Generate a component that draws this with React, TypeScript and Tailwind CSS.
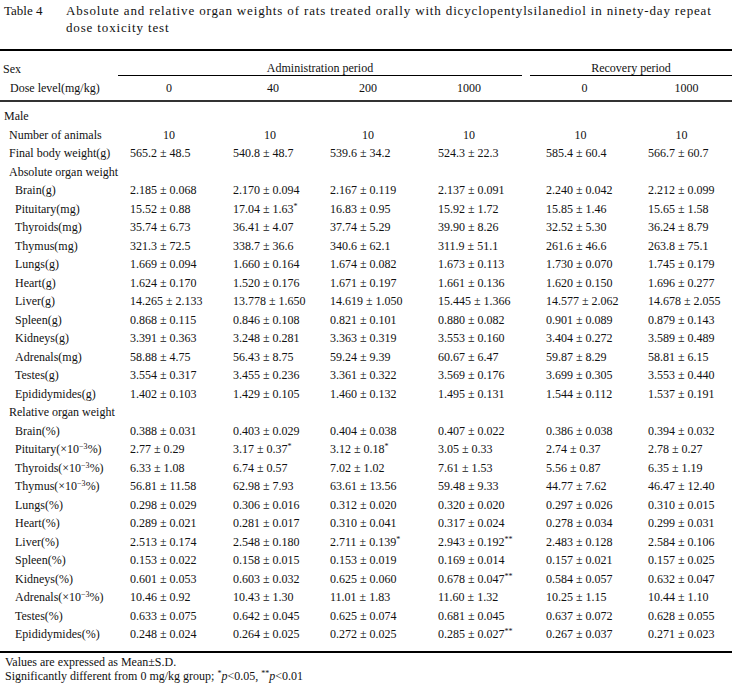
type Row = {
  label: React.ReactNode;
  indent: "group" | "item" | "sex";
  values?: string[];
};

const pad = ["pl-[12px]", "pl-[13px]", "pl-[10px]", "pl-[22px]", "pl-[16px]", "pl-[17px]"];

const e3 = (name: string) => (
  <>
    {name}(×10<sup className="text-[8px] leading-none">−3</sup>%)
  </>
);

const rows: Row[] = [
  { label: "Male", indent: "sex" },
  { label: "Number of animals", indent: "group", values: ["10", "10", "10", "10", "10", "10"] },
  { label: "Final body weight(g)", indent: "group", values: ["565.2 ± 48.5", "540.8 ± 48.7", "539.6 ± 34.2", "524.3 ± 22.3", "585.4 ± 60.4", "566.7 ± 60.7"] },
  { label: "Absolute organ weight", indent: "group" },
  { label: "Brain(g)", indent: "item", values: ["2.185 ± 0.068", "2.170 ± 0.094", "2.167 ± 0.119", "2.137 ± 0.091", "2.240 ± 0.042", "2.212 ± 0.099"] },
  { label: "Pituitary(mg)", indent: "item", values: ["15.52 ± 0.88", "17.04 ± 1.63*", "16.83 ± 0.95", "15.92 ± 1.72", "15.85 ± 1.46", "15.65 ± 1.58"] },
  { label: "Thyroids(mg)", indent: "item", values: ["35.74 ± 6.73", "36.41 ± 4.07", "37.74 ± 5.29", "39.90 ± 8.26", "32.52 ± 5.30", "36.24 ± 8.79"] },
  { label: "Thymus(mg)", indent: "item", values: ["321.3 ± 72.5", "338.7 ± 36.6", "340.6 ± 62.1", "311.9 ± 51.1", "261.6 ± 46.6", "263.8 ± 75.1"] },
  { label: "Lungs(g)", indent: "item", values: ["1.669 ± 0.094", "1.660 ± 0.164", "1.674 ± 0.082", "1.673 ± 0.113", "1.730 ± 0.070", "1.745 ± 0.179"] },
  { label: "Heart(g)", indent: "item", values: ["1.624 ± 0.170", "1.520 ± 0.176", "1.671 ± 0.197", "1.661 ± 0.136", "1.620 ± 0.150", "1.696 ± 0.277"] },
  { label: "Liver(g)", indent: "item", values: ["14.265 ± 2.133", "13.778 ± 1.650", "14.619 ± 1.050", "15.445 ± 1.366", "14.577 ± 2.062", "14.678 ± 2.055"] },
  { label: "Spleen(g)", indent: "item", values: ["0.868 ± 0.115", "0.846 ± 0.108", "0.821 ± 0.101", "0.880 ± 0.082", "0.901 ± 0.089", "0.879 ± 0.143"] },
  { label: "Kidneys(g)", indent: "item", values: ["3.391 ± 0.363", "3.248 ± 0.281", "3.363 ± 0.319", "3.553 ± 0.160", "3.404 ± 0.272", "3.589 ± 0.489"] },
  { label: "Adrenals(mg)", indent: "item", values: ["58.88 ± 4.75", "56.43 ± 8.75", "59.24 ± 9.39", "60.67 ± 6.47", "59.87 ± 8.29", "58.81 ± 6.15"] },
  { label: "Testes(g)", indent: "item", values: ["3.554 ± 0.317", "3.455 ± 0.236", "3.361 ± 0.322", "3.569 ± 0.176", "3.699 ± 0.305", "3.553 ± 0.440"] },
  { label: "Epididymides(g)", indent: "item", values: ["1.402 ± 0.103", "1.429 ± 0.105", "1.460 ± 0.132", "1.495 ± 0.131", "1.544 ± 0.112", "1.537 ± 0.191"] },
  { label: "Relative organ weight", indent: "group" },
  { label: "Brain(%)", indent: "item", values: ["0.388 ± 0.031", "0.403 ± 0.029", "0.404 ± 0.038", "0.407 ± 0.022", "0.386 ± 0.038", "0.394 ± 0.032"] },
  { label: e3("Pituitary"), indent: "item", values: ["2.77 ± 0.29", "3.17 ± 0.37*", "3.12 ± 0.18*", "3.05 ± 0.33", "2.74 ± 0.37", "2.78 ± 0.27"] },
  { label: e3("Thyroids"), indent: "item", values: ["6.33 ± 1.08", "6.74 ± 0.57", "7.02 ± 1.02", "7.61 ± 1.53", "5.56 ± 0.87", "6.35 ± 1.19"] },
  { label: e3("Thymus"), indent: "item", values: ["56.81 ± 11.58", "62.98 ± 7.93", "63.61 ± 13.56", "59.48 ± 9.33", "44.77 ± 7.62", "46.47 ± 12.40"] },
  { label: "Lungs(%)", indent: "item", values: ["0.298 ± 0.029", "0.306 ± 0.016", "0.312 ± 0.020", "0.320 ± 0.020", "0.297 ± 0.026", "0.310 ± 0.015"] },
  { label: "Heart(%)", indent: "item", values: ["0.289 ± 0.021", "0.281 ± 0.017", "0.310 ± 0.041", "0.317 ± 0.024", "0.278 ± 0.034", "0.299 ± 0.031"] },
  { label: "Liver(%)", indent: "item", values: ["2.513 ± 0.174", "2.548 ± 0.180", "2.711 ± 0.139*", "2.943 ± 0.192**", "2.483 ± 0.128", "2.584 ± 0.106"] },
  { label: "Spleen(%)", indent: "item", values: ["0.153 ± 0.022", "0.158 ± 0.015", "0.153 ± 0.019", "0.169 ± 0.014", "0.157 ± 0.021", "0.157 ± 0.025"] },
  { label: "Kidneys(%)", indent: "item", values: ["0.601 ± 0.053", "0.603 ± 0.032", "0.625 ± 0.060", "0.678 ± 0.047**", "0.584 ± 0.057", "0.632 ± 0.047"] },
  { label: e3("Adrenals"), indent: "item", values: ["10.46 ± 0.92", "10.43 ± 1.30", "11.01 ± 1.83", "11.60 ± 1.32", "10.25 ± 1.15", "10.44 ± 1.10"] },
  { label: "Testes(%)", indent: "item", values: ["0.633 ± 0.075", "0.642 ± 0.045", "0.625 ± 0.074", "0.681 ± 0.045", "0.637 ± 0.072", "0.628 ± 0.055"] },
  { label: "Epididymides(%)", indent: "item", values: ["0.248 ± 0.024", "0.264 ± 0.025", "0.272 ± 0.025", "0.285 ± 0.027**", "0.267 ± 0.037", "0.271 ± 0.023"] },
];

const cols = "grid grid-cols-[118px_102px_100px_96px_106px_8px_101px_101px]";

function Value({ text, i }: { text: string; i: number }) {
  // trailing asterisks are set as small superscripts
  const m = text.match(/^(.*?)(\*+)$/);
  const isCount = text === "10";
  return (
    <div className={isCount ? "text-center" : pad[i]}>
      {m ? m[1] : text}
      {m && <sup className="text-[8px] leading-none">{m[2]}</sup>}
    </div>
  );
}

export default function App() {
  return (
    <div className="w-[732px] h-[683px] bg-white text-[#111] font-['Liberation_Serif',serif] overflow-hidden">
      {/* caption */}
      <div className="flex pt-[2px] text-[13px] leading-[17px]">
        <div className="w-[66px] shrink-0 pl-[4px]">Table 4</div>
        <div className="w-[662px] tracking-[0.85px]">
          Absolute and relative organ weights of rats treated orally with dicyclopentylsilanediol in ninety-day repeat dose toxicity test
        </div>
      </div>

      <div className="mt-[13px] h-[2px] bg-black" />

      {/* header */}
      <div className="text-[12px] leading-[14px]">
        <div className={`${cols} h-[25px]`}>
          <div className="self-end pl-[3px]">Sex</div>
          <div className="col-span-4 flex items-end justify-center border-b border-black">Administration period</div>
          <div />
          <div className="col-span-2 flex items-end justify-center border-b border-black">Recovery period</div>
        </div>
        <div className={`${cols} h-[23px] items-center`}>
          <div className="pl-[10px]">Dose level(mg/kg)</div>
          <div className="text-center">0</div>
          <div className="text-center pl-[6px]">40</div>
          <div className="text-center">200</div>
          <div className="text-center">1000</div>
          <div />
          <div className="text-center pl-[8px]">0</div>
          <div className="text-center pl-[10px]">1000</div>
        </div>
      </div>
      <div className="mt-[1px] h-[2px] bg-[#333]" />

      {/* body */}
      <div className="pt-[5px] text-[12px] leading-[14px]">
        {rows.map((r, idx) => (
          <div key={idx} className={`${cols} h-[18.5px] items-center whitespace-nowrap`}>
            <div className={r.indent === "sex" ? "pl-[4px]" : r.indent === "group" ? "pl-[9px]" : "pl-[15px]"}>
              {r.label}
            </div>
            {r.values?.slice(0, 4).map((v, i) => <Value key={i} text={v} i={i} />)}
            {r.values && <div />}
            {r.values?.slice(4).map((v, i) => <Value key={i + 4} text={v} i={i + 4} />)}
          </div>
        ))}
      </div>

      <div className="mt-[7.5px] h-[2px] bg-black" />

      {/* footnotes */}
      <div className="mt-[2px] pl-[5px] text-[12px] leading-[14px]">
        <div>Values are expressed as Mean±S.D.</div>
        <div>
          Significantly different from 0 mg/kg group; <sup className="text-[8px] leading-none">*</sup>
          <i>p</i>&lt;0.05, <sup className="text-[8px] leading-none">**</sup>
          <i>p</i>&lt;0.01
        </div>
      </div>
    </div>
  );
}
